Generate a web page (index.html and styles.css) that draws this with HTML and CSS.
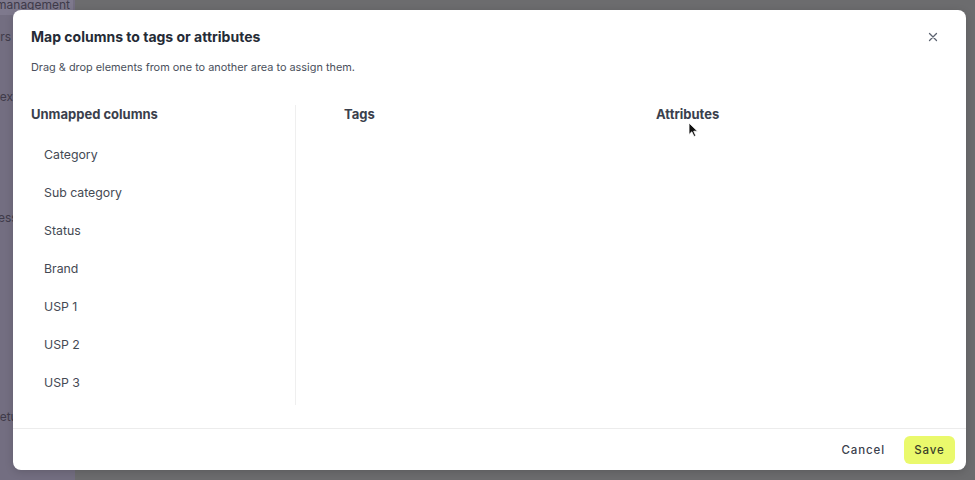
FILE: index.html
```html
<!DOCTYPE html>
<html lang="en">
<head>
    <meta charset="UTF-8">
    <meta name="viewport" content="width=device-width, initial-scale=1.0">
    <title>Map columns</title>
    <link rel="stylesheet" href="styles.css">
</head>
<body>
    <div class="app">
        <aside class="sidebar">
            <div class="side-item active">Stock management</div>
            <div class="side-item item-users">Users</div>
            <div class="side-item item-index">Index</div>
            <div class="side-item item-access">Access</div>
            <div class="side-item item-setup">Setup</div>
        </aside>
        <main class="page"></main>
    </div>

    <div class="modal">
        <div class="modal-header">
            <h1 class="modal-title">Map columns to tags or attributes</h1>
            <button class="close-btn" aria-label="Close">
                <svg width="10" height="10" viewBox="0 0 10 10">
                    <path d="M1.5 1.5 L8.5 8.5 M8.5 1.5 L1.5 8.5" stroke="#5b6270" stroke-width="1.3" stroke-linecap="round"/>
                </svg>
            </button>
        </div>
        <p class="modal-desc">Drag &amp; drop elements from one to another area to assign them.</p>

        <div class="modal-body">
            <section class="col col-unmapped">
                <h2 class="col-title">Unmapped columns</h2>
                <ul class="col-list">
                    <li>Category</li>
                    <li>Sub category</li>
                    <li>Status</li>
                    <li>Brand</li>
                    <li>USP 1</li>
                    <li>USP 2</li>
                    <li>USP 3</li>
                </ul>
            </section>
            <div class="targets">
                <section class="col col-target">
                    <h2 class="col-title">Tags</h2>
                </section>
                <section class="col col-target">
                    <h2 class="col-title">Attributes</h2>
                </section>
            </div>
        </div>

        <div class="modal-footer">
            <button class="btn btn-cancel">Cancel</button>
            <button class="btn btn-save">Save</button>
        </div>
    </div>

    <svg class="cursor" width="12" height="16" viewBox="0 0 12 16">
        <path d="M1 1 L1 12.5 L3.8 9.8 L6 14.5 L7.8 13.7 L5.7 9.2 L9.5 9.2 Z" fill="#111" stroke="#fff" stroke-width="0.8"/>
    </svg>
</body>
</html>
```

FILE: styles.css
```css
* {
    box-sizing: border-box;
}
body {
    margin: 0;
    font-family: Inter, "Noto Sans", sans-serif;
    background-color: #6c6c6e;
    overflow: hidden;
}
.app {
    display: flex;
    height: 480px;
}
.sidebar {
    width: 75px;
    background-color: #736e81;
    color: #3f3b4a;
    font-size: 12px;
    overflow: hidden;
    white-space: nowrap;
}
.side-item {
    width: 73px;
    height: 20px;
    line-height: 20px;
}
.side-item.active {
    background-color: #7e798d;
    margin-top: -5px;
    padding-right: 3px;
    display: flex;
    justify-content: flex-end;
}
.item-users {
    margin-top: 12px;
    text-indent: -22px;
}
.item-index {
    margin-top: 40px;
    text-indent: -18px;
}
.item-access {
    margin-top: 101px;
    text-indent: -24px;
}
.item-setup {
    margin-top: 179px;
    text-indent: -8px;
}
.page {
    flex: 1;
}

.modal {
    position: absolute;
    top: 10px;
    left: 13px;
    width: 953px;
    height: 460px;
    background-color: #fff;
    border-radius: 8px;
    box-shadow: 0 2px 8px rgba(0, 0, 0, 0.15);
    display: flex;
    flex-direction: column;
    color: #2f3542;
}
.modal-header {
    display: flex;
    justify-content: space-between;
    align-items: center;
    padding: 17px 27px 0 18px;
}
.modal-title {
    margin: 0;
    font-size: 14px;
    font-weight: 700;
    line-height: 20px;
    color: #252b36;
}
.close-btn {
    border: none;
    background: none;
    padding: 0;
    width: 12px;
    height: 12px;
    display: flex;
    align-items: center;
    justify-content: center;
}
.modal-desc {
    margin: 12px 0 0 18px;
    font-size: 10.9px;
    line-height: 16px;
    color: #4a505c;
}

.modal-body {
    display: flex;
    margin-top: 30px;
    padding-left: 18px;
}
.col-title {
    margin: 0;
    font-size: 13px;
    font-weight: 700;
    line-height: 18px;
    color: #3a404c;
}
.col-unmapped {
    flex-shrink: 0;
    width: 265px;
    border-right: 1px solid #efefef;
    padding-bottom: 3px;
}
.col-list {
    list-style: none;
    margin: 13px 0 0;
    padding: 0 0 0 13px;
}
.col-list li {
    height: 38px;
    line-height: 38px;
    font-size: 12.3px;
    color: #444953;
}
.targets {
    display: flex;
    padding-left: 48px;
}
.col-target {
    width: 312px;
    flex-shrink: 0;
}

.modal-footer {
    margin-top: auto;
    border-top: 1px solid #ececec;
    display: flex;
    justify-content: flex-end;
    align-items: center;
    padding: 6px 11px 6px 0;
    height: 42px;
}
.btn {
    border: none;
    font-family: Inter, "Noto Sans", sans-serif;
    font-size: 11.5px;
    font-weight: 500;
    letter-spacing: 0.9px;
    height: 28px;
    border-radius: 6px;
    cursor: pointer;
}
.btn-cancel {
    background: none;
    color: #3a404c;
    padding: 0 19px 0 10px;
}
.btn-save {
    background-color: #eaf96c;
    color: #3a3f2a;
    padding: 0;
    width: 51px;
}

.cursor {
    position: absolute;
    left: 688px;
    top: 122px;
}
```
